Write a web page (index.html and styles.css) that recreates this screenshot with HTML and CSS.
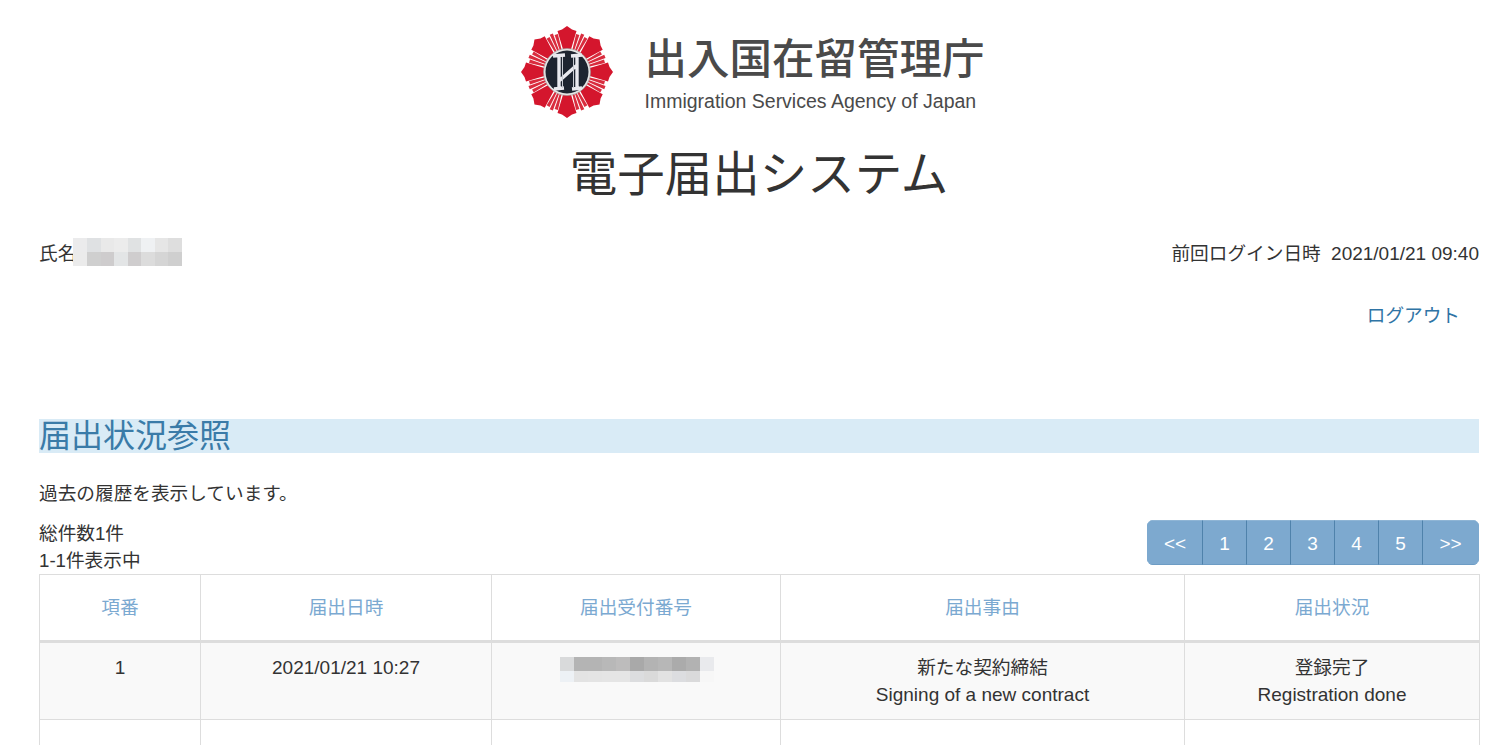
FILE: index.html
```html
<!DOCTYPE html>
<html lang="ja">
<head>
<meta charset="utf-8">
<title>電子届出システム</title>
<link rel="stylesheet" href="styles.css">
</head>
<body>
<div class="page">
  <header class="logo">
    <svg class="emblem" viewBox="-46 -46 92 92" aria-hidden="true">
      <defs>
        <g id="seg">
          <path class="petal" d="M-3.500 -21L-9.500 -41L-5 -42.500L0 -46L5 -42.500L9.500 -41L3.500 -21Z"/>
          <g class="rays">
            <path d="M-.8 -20L-1.700 -39L1.700 -39L.8 -20Z" transform="rotate(16)"/>
            <path d="M-.8 -20L-1.700 -41L1.700 -41L.8 -20Z" transform="rotate(22.5)"/>
            <path d="M-.8 -20L-1.700 -39L1.700 -39L.8 -20Z" transform="rotate(29)"/>
          </g>
        </g>
      </defs>
      <use href="#seg"/>
      <use href="#seg" transform="rotate(45)"/>
      <use href="#seg" transform="rotate(90)"/>
      <use href="#seg" transform="rotate(135)"/>
      <use href="#seg" transform="rotate(180)"/>
      <use href="#seg" transform="rotate(225)"/>
      <use href="#seg" transform="rotate(270)"/>
      <use href="#seg" transform="rotate(315)"/>
      <circle class="ring" r="23.500"/>
      <circle class="disc" r="21.500"/>
      <path class="mark" d="M-8 -16L-8 17M10 -16L10 17M-14 -16L-2 -17M4 -16L15 -17M-13 17L-3 16M5 17L15 16M-8 9L10 -7"/>
      <path class="mark-thin" d="M-4.500 -15L-4.500 16M6.500 -15L6.500 16"/>
    </svg>
    <div class="logo-text">
      <div class="logo-ja">出入国在留管理庁</div>
      <div class="logo-en">Immigration Services Agency of Japan</div>
    </div>
  </header>
  <h1 class="title">電子届出システム</h1>
  <div class="user-row">
    <div class="user-name">氏名<div class="mosaic mosaic-name"><i></i><i></i><i></i><i></i><i></i><i></i><i></i><i></i><i></i><i></i><i></i><i></i><i></i><i></i><i></i><i></i></div></div>
    <div>前回ログイン日時&nbsp;&nbsp;<span class="en">2021/01/21 09:40</span></div>
  </div>
  <div class="logout-row"><a class="link" href="#">ログアウト</a></div>
  <h2 class="section">届出状況参照</h2>
  <p class="lead">過去の履歴を表示しています。</p>
  <div class="list-head">
    <div class="counts">
      <div>総件数1件</div>
      <div>1-1件表示中</div>
    </div>
    <nav class="pager">
      <a class="end" href="#">&lt;&lt;</a><a href="#">1</a><a href="#">2</a><a href="#">3</a><a href="#">4</a><a href="#">5</a><a class="end" href="#">&gt;&gt;</a>
    </nav>
  </div>
  <table class="grid">
    <colgroup>
      <col class="c1"><col class="c2"><col class="c3"><col class="c4"><col class="c5">
    </colgroup>
    <thead>
      <tr><th>項番</th><th>届出日時</th><th>届出受付番号</th><th>届出事由</th><th>届出状況</th></tr>
    </thead>
    <tbody>
      <tr class="odd">
        <td class="en">1</td>
        <td class="en">2021/01/21 10:27</td>
        <td><div class="mosaic mosaic-no"><i></i><i></i><i></i><i></i><i></i><i></i><i></i><i></i><i></i><i></i><i></i><i></i><i></i><i></i><i></i><i></i><i></i><i></i><i></i><i></i><i></i><i></i></div></td>
        <td>新たな契約締結<br><span class="en">Signing of a new contract</span></td>
        <td>登録完了<br><span class="en">Registration done</span></td>
      </tr>
      <tr class="blank"><td></td><td></td><td></td><td></td><td></td></tr>
    </tbody>
  </table>
</div>
</body>
</html>
```
FILE: styles.css
```css
* { box-sizing: border-box; }
html, body { margin: 0; height: 745px; overflow: hidden; background: #fff; }
body {
  font-family: "Liberation Sans", "Noto Sans CJK JP", sans-serif;
  font-size: 18.67px;
  line-height: 27px;
  color: #333;
}
.en { font-size: 19px; }
.page { padding: 0 21px 0 39px; }

.logo { display: flex; justify-content: center; padding-top: 26px; height: 132px; }
.emblem { width: 92px; height: 92px; flex: none; }
.petal { fill: #d4162d; }
.rays path { fill: #d92c3e; }
.ring { fill: #e6e6e6; stroke: #999; stroke-width: .6; }
.disc { fill: #1d2430; }
.mark { stroke: #e9e9ef; stroke-width: 3.4; fill: none; }
.mark-thin { stroke: #c9ccd4; stroke-width: 1; fill: none; }
.logo-text { width: 385px; padding-left: 32px; color: #4a4a4a; }
.logo-ja { font-size: 42.5px; line-height: 50px; margin-top: 9px; font-weight: 500; white-space: nowrap; }
.logo-en { font-size: 19.5px; line-height: 24px; margin-top: 4px; white-space: nowrap; }

.title { margin: 13px 0 0; font-size: 47.5px; line-height: 60px; font-weight: 400; text-align: center; }

.user-row { display: flex; justify-content: space-between; align-items: flex-start; margin-top: 35px; height: 28px; }
.user-name { display: flex; }
.mosaic { display: grid; }
.mosaic i { display: block; }
.mosaic-name { grid-template-columns: repeat(8, 13.6px); grid-template-rows: 14px 14px; margin-top: -2px; margin-left: -3px; }
.mosaic-name i:nth-child(1) { background: #ebebec; }
.mosaic-name i:nth-child(2) { background: #dfe1e3; }
.mosaic-name i:nth-child(3) { background: #e9e9e9; }
.mosaic-name i:nth-child(4) { background: #ececec; }
.mosaic-name i:nth-child(5) { background: #e0e2e3; }
.mosaic-name i:nth-child(6) { background: #eff1f3; }
.mosaic-name i:nth-child(7) { background: #e6e6e6; }
.mosaic-name i:nth-child(8) { background: #dedede; }
.mosaic-name i:nth-child(9) { background: #ebebeb; }
.mosaic-name i:nth-child(10) { background: #cfcfcf; }
.mosaic-name i:nth-child(11) { background: #cecccd; }
.mosaic-name i:nth-child(12) { background: #e3e5e6; }
.mosaic-name i:nth-child(13) { background: #cfcdce; }
.mosaic-name i:nth-child(14) { background: #dcdcdc; }
.mosaic-name i:nth-child(15) { background: #d5d5d5; }
.mosaic-name i:nth-child(16) { background: #cfcfcf; }

.logout-row { margin-top: 34px; height: 27px; padding-right: 19px; text-align: right; }
.link { color: #2f74a5; text-decoration: none; }

.section { margin: 90px 0 0; height: 34px; background: #d9ebf6; color: #3a7ba8; font-size: 32px; line-height: 34px; font-weight: 400; }
.lead { margin: 27px 0 0; }
.list-head { display: flex; justify-content: space-between; align-items: flex-start; margin-top: 13px; height: 54px; }
.counts div { height: 27px; }

.pager { display: flex; height: 45px; border-radius: 6px; overflow: hidden; font-size: 19px; }
.pager a {
  width: 44px; height: 45px; line-height: 45px; text-align: center; color: #fff; text-decoration: none;
  background: #7da9cf; border: 1px solid #4f82ab; border-left-width: 0; border-top-color: #8fb5d5; border-bottom-color: #6d9cc4;
}
.pager a.end { width: 56px; }
.pager a.end:first-child { border-left: 1px solid #7da9cf; }
.pager a.end:last-child { border-right: 1px solid #7da9cf; }

.grid { width: 1440px; table-layout: fixed; border-collapse: collapse; }
.c1 { width: 161px; }
.c2 { width: 291px; }
.c3 { width: 289px; }
.c4 { width: 404px; }
.c5 { width: 295px; }
.grid th, .grid td { border: 1px solid #ddd; text-align: center; vertical-align: top; padding: 11px 8px; font-weight: 400; }
.grid th { color: #7ba9d1; height: 67px; padding-top: 19px; padding-bottom: 19px; border-bottom-width: 3px; }
.odd td { background: #f9f9f9; height: 77px; }
.blank td { height: 77px; }
.mosaic-no { grid-template-columns: repeat(11, 14px); grid-template-rows: 14px 11px; justify-content: center; margin: 3px 0 0 1px; }
.mosaic-no i:nth-child(1) { background: #d9dadb; }
.mosaic-no i:nth-child(2) { background: #b4b4b4; }
.mosaic-no i:nth-child(3) { background: #b4b4b4; }
.mosaic-no i:nth-child(4) { background: #b8b8b8; }
.mosaic-no i:nth-child(5) { background: #bdbcbc; }
.mosaic-no i:nth-child(6) { background: #a9a9a9; }
.mosaic-no i:nth-child(7) { background: #b3b3b3; }
.mosaic-no i:nth-child(8) { background: #b7b7b7; }
.mosaic-no i:nth-child(9) { background: #ababab; }
.mosaic-no i:nth-child(10) { background: #b2b2b2; }
.mosaic-no i:nth-child(11) { background: #e9eaed; }
.mosaic-no i:nth-child(12) { background: #edf1f5; }
.mosaic-no i:nth-child(13) { background: #e3e3e3; }
.mosaic-no i:nth-child(14) { background: #e4e4e4; }
.mosaic-no i:nth-child(15) { background: #e5e5e5; }
.mosaic-no i:nth-child(16) { background: #e5e5e5; }
.mosaic-no i:nth-child(17) { background: #dcdddf; }
.mosaic-no i:nth-child(18) { background: #dadada; }
.mosaic-no i:nth-child(19) { background: #e2e2e2; }
.mosaic-no i:nth-child(20) { background: #dcdde0; }
.mosaic-no i:nth-child(21) { background: #dadadb; }
.mosaic-no i:nth-child(22) { background: #f7f7f7; }
```
